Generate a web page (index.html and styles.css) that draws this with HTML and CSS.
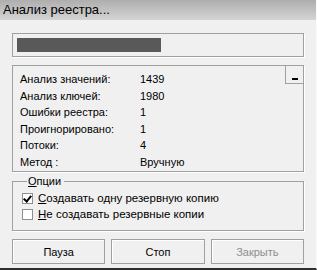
FILE: index.html
```html
<!DOCTYPE html>
<html>
<head>
    <meta charset="UTF-8">
    <title>Анализ реестра...</title>
    <link rel="stylesheet" href="styles.css">
</head>
<body>
<div class="window">
    <div class="titlebar">Анализ реестра...</div>
    <div class="client">
        <div class="progress">
            <div class="progress-fill" style="width:144px"></div>
        </div>

        <div class="stats">
            <dl class="stats-list">
                <dt>Анализ значений:</dt><dd>1439</dd>
                <dt>Анализ ключей:</dt><dd>1980</dd>
                <dt>Ошибки реестра:</dt><dd>1</dd>
                <dt>Проигнорировано:</dt><dd>1</dd>
                <dt>Потоки:</dt><dd>4</dd>
                <dt>Метод :</dt><dd>Вручную</dd>
            </dl>
            <span class="collapse"><span class="collapse-bar"></span></span>
        </div>

        <fieldset class="options">
            <legend><u>О</u>пции</legend>
            <label class="check"><span class="box checked"></span><span><u>С</u>оздавать одну резервную копию</span></label>
            <label class="check"><span class="box"></span><span><u>Н</u>е создавать резервные копии</span></label>
        </fieldset>

        <div class="buttons">
            <span class="btn">Пауза</span>
            <span class="btn">Стоп</span>
            <span class="btn disabled">Закрыть</span>
        </div>
    </div>
</div>
</body>
</html>
```

FILE: styles.css
```css
body, dl, dt, dd, fieldset, legend {
    margin: 0;
    padding: 0;
}
body {
    background: #f0f0f0;
    font-family: "Liberation Sans", Arial, sans-serif;
    font-size: 11px;
    color: #000;
}
.window {
    width: 317px;
    height: 270px;
    box-sizing: border-box;
    background: #f0f0f0;
    border-bottom: 2px solid #2e2e2e;
    border-right: 1px solid #fafafa;
    display: flex;
    flex-direction: column;
}
.titlebar {
    height: 20px;
    line-height: 19px;
    padding-left: 3px;
    font-size: 13px;
    background: linear-gradient(#aeaeae, #d4d4d4);
    color: #000;
}
.client {
    padding: 13px 12px 0 12px;
}

/* progress */
.progress {
    height: 24px;
    box-sizing: border-box;
    border: 1px solid #a0a0a0;
    box-shadow: 1px 1px 0 #fff;
    padding: 4px;
}
.progress-fill {
    height: 14px;
    background: #595959;
}

/* stats */
.stats {
    margin-top: 8px;
    height: 107px;
    box-sizing: border-box;
    border: 1px solid #a0a0a0;
    box-shadow: 1px 1px 0 #fff;
    display: flex;
    align-items: flex-start;
}
.stats-list {
    flex: 1;
    display: grid;
    grid-template-columns: 120px 1fr;
    grid-auto-rows: 16.5px;
    align-items: center;
    padding: 5px 0 0 7px;
}
.collapse {
    width: 18px;
    height: 18px;
    border-left: 1px solid #a0a0a0;
    border-bottom: 1px solid #a0a0a0;
    display: flex;
    justify-content: center;
    align-items: flex-end;
    padding-bottom: 3px;
    box-sizing: border-box;
}
.collapse-bar {
    width: 6px;
    height: 2px;
    background: #000;
}

/* options */
.options {
    margin-top: 3px;
    height: 52px;
    border: 1px solid #a0a0a0;
    box-shadow: 1px 1px 0 #fff;
    padding: 2px 0 0 9px;
}
.options legend {
    margin-left: 5px;
    padding: 0 3px 0 1px;
    line-height: 13px;
}
.check {
    display: flex;
    align-items: center;
    height: 16px;
    gap: 5px;
    font-size: 11.5px;
}
.box {
    width: 11px;
    height: 11px;
    box-sizing: border-box;
    border: 1px solid #8e8f8f;
    background: #fff;
    position: relative;
}
.box.checked::after {
    content: "";
    position: absolute;
    left: 2px;
    top: 0px;
    width: 3px;
    height: 6px;
    border: solid #000;
    border-width: 0 2px 2px 0;
    transform: rotate(40deg);
}

/* buttons */
.buttons {
    margin-top: 8px;
    display: flex;
    gap: 6px;
}
.btn {
    flex: 1;
    height: 25px;
    box-sizing: border-box;
    border: 1px solid #a0a0a0;
    box-shadow: inset 1px 1px 0 #fff;
    display: flex;
    justify-content: center;
    align-items: center;
}
.btn.disabled {
    color: #8d8d8d;
}
```
